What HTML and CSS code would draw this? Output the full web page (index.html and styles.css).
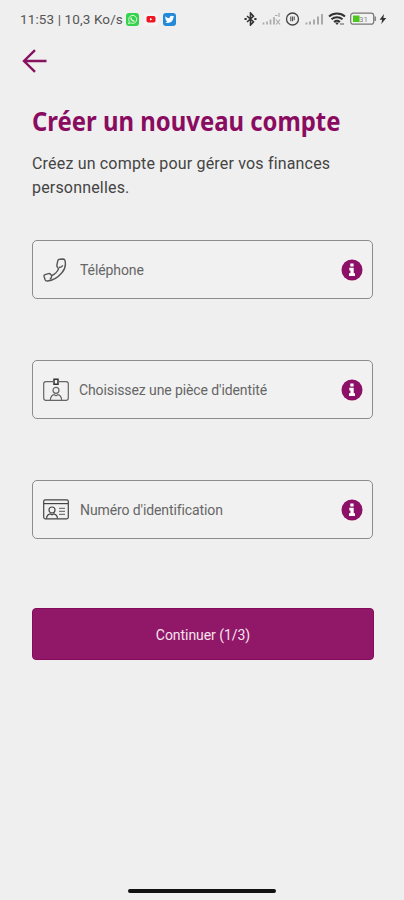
FILE: index.html
```
<!DOCTYPE html>
<html lang="fr">
<head>
  <meta charset="UTF-8">
  <meta name="viewport" content="width=device-width, initial-scale=1.0">
  <title>Créer un nouveau compte</title>
  <link rel="stylesheet" href="styles.css">
</head>

<body>
  <div class="statusbar">
    <span class="time">11:53 | 10,3 Ko/s</span>
    <div class="apps">
      <svg width="13" height="13" viewBox="0 0 13 13">
        <rect width="13" height="13" rx="3" fill="#35d24b"/>
        <path d="M2.5 10.6l.7-2.3A4 4 0 1 1 4.800 9.900z" fill="none" stroke="#d9f8dc" stroke-width="1"/>
        <path d="M5 4.400c0 2 1.400 3.500 3.500 3.800" fill="none" stroke="#d9f8dc" stroke-width="1.500"/>
      </svg>
      <svg width="14" height="13" viewBox="0 0 14 13">
        <rect width="14" height="13" rx="3" fill="#f5f4f4"/>
        <rect x="2.500" y="3" width="9" height="6.500" rx="1.800" fill="#f01520"/>
        <path d="M6 4.900v2.700l2.500-1.350z" fill="#fff"/>
      </svg>
      <svg width="13" height="13" viewBox="0 0 13 13">
        <rect width="13" height="13" rx="3" fill="#2389d9"/>
        <path d="M2.300 3.300c1.200 1.300 2.500 2 4.200 2 -.2-2.600 2.500-3.200 3.500-2l1.200-.4-.8 1.400c0 4.600-4.500 7-8.200 5l2.200-.8c-1.500-.5-2.200-2.500-2.100-5.200z" fill="#fff"/>
      </svg>
    </div>
    <div class="system">
      <svg width="13" height="14" viewBox="0 0 13 14">
        <path d="M3 4l6.500 5.700L6.500 13V1l3 3.300L3 10" fill="none" stroke="#333" stroke-width="1.600"/>
        <path d="M.5 7h2.200M10.300 7h2.200" stroke="#333" stroke-width="2"/>
      </svg>
      <svg class="signal" width="19" height="14" viewBox="0 0 19 14">
        <path d="M1.500 10.500v2M5 9.500v3M8.500 7.500v5M12 5v7.500" stroke="#aaa" stroke-width="1.700"/>
        <path d="M13 3.500h2.500M17 1v4M14 7.500l4 5M18 7.500l-4 5" stroke="#aaa" stroke-width="1.200"/>
      </svg>
      <svg width="15" height="14" viewBox="0 0 15 14">
        <circle cx="7.500" cy="7" r="6" fill="none" stroke="#444" stroke-width="1.300"/>
        <path d="M5.800 4.500v4.700M7.500 4.500v4.700M9.200 4.500v3.700" stroke="#555" stroke-width="1.100"/>
      </svg>
      <svg class="signal" width="19" height="14" viewBox="0 0 19 14">
        <path d="M1.500 10.500v2M5 9.500v3M9 7.500v5M13 4.500v8M17 2v10.500" stroke="#aaa" stroke-width="2"/>
      </svg>
      <svg class="wifi" width="18" height="14" viewBox="0 0 18 14">
        <path d="M1 4.500c4.500-4 11.500-4 16 0M3.500 7.300c3.200-2.800 7.800-2.800 11 0M6 10c2-1.600 4-1.600 6 0" fill="none" stroke="#333" stroke-width="1.900"/>
        <path d="M7 10.500h4L9 13z" fill="#333"/>
        <path d="M12 12h4" stroke="#888" stroke-width="1.500"/>
      </svg>
      <svg class="battery" width="27" height="14" viewBox="0 0 27 14">
        <rect x=".7" y="1.200" width="23" height="11" rx="2.500" fill="#f2f2f2" stroke="#777" stroke-width="1.200"/>
        <path d="M25.200 4.500v4.500" stroke="#888" stroke-width="1.700"/>
        <rect x="3" y="3.500" width="6.500" height="6.500" fill="#4bc91b"/>
        <text x="9" y="9.800" class="level">31</text>
      </svg>
      <svg width="8" height="14" viewBox="0 0 8 14">
        <path d="M5 2L.6 7.700h2.600L2.300 12l5-6H4.400z" fill="#333"/>
      </svg>
    </div>
  </div>

  <a class="back" href="#">
    <svg width="26" height="26" viewBox="0 0 26 26">
      <path d="M13 2.200L2 13l11 10.800M2 13h22.500" fill="none" stroke="#87125f" stroke-width="2.400"/>
    </svg>
  </a>

  <div class="content">
    <h1><span>Créer un nouveau compte</span></h1>
    <p class="intro">Créez un compte pour gérer vos finances personnelles.</p>

    <div class="field phone">
      <svg class="icon" width="26" height="26" viewBox="0 0 26 26">
        <g fill="none" stroke="#555" stroke-width="1.400" stroke-linejoin="round">
          <path d="M16.800 2.300l3.400-.3q1.300 0 1.700 1.200c1.200 4.500.1 9-3 12.600-3.800 4.500-9 7.800-14.500 8.200q-1.800.1-2.300-1.300l-1-3.200q-.4-1.400.9-1.800l3.600-1.100q1.200-.3 1.900.6l1.200 1.400c3-1.200 5.600-3.700 6.900-6.800l-1.200-1.600q-.7-.9-.5-2l.9-4.600q.3-1.200 2-1.300z"/>
          <path d="M16 10.500l2.300-.7q1.200-.4 1.300-1.500M8.700 18.600l-.4 2.200q-.3 1.100-1.500 1.400"/>
        </g>
      </svg>
      <span class="label">Téléphone</span>
      <svg class="info" width="22" height="22" viewBox="0 0 22 22">
        <circle cx="11" cy="11" r="10.500"/>
        <path d="M9.300 4.500h3.300v3H9.300zM8.300 8.800h4.400v5.400H14V17H8v-2.800h1.400v-2.700H8.300z"/>
      </svg>
    </div>

    <div class="field piece">
      <svg class="icon" width="26" height="26" viewBox="0 0 26 26">
        <g fill="none" stroke="#666" stroke-width="1.200">
          <path d="M10 4.700H2.800Q.7 4.700.7 6.800v14.300q0 2.200 2.100 2.200h20.400q2.100 0 2.100-2.200V6.800q0-2.100-2.100-2.100H16"/>
          <circle cx="13" cy="13.300" r="3"/>
          <path d="M7.300 23.300c.2-3.700 1.800-5.200 3.700-5.700l2 1.200 2-1.200c1.900.5 3.500 2 3.700 5.700"/>
        </g>
        <path d="M11 2.200h4v5h-4z" fill="none" stroke="#333" stroke-width="1.500"/>
      </svg>
      <span class="label">Choisissez une pièce d'identité</span>
      <svg class="info" width="22" height="22" viewBox="0 0 22 22">
        <circle cx="11" cy="11" r="10.500"/>
        <path d="M9.300 4.500h3.300v3H9.300zM8.300 8.800h4.400v5.400H14V17H8v-2.800h1.400v-2.700H8.300z"/>
      </svg>
    </div>

    <div class="field numero">
      <svg class="icon" width="26" height="26" viewBox="0 0 26 26">
        <g fill="none" stroke="#444" stroke-width="1.200">
          <rect x=".7" y="2.800" width="24.600" height="19" rx="1.500"/>
          <path d="M1 6.600h24"/>
          <circle cx="9" cy="13" r="3"/>
          <path d="M3.500 21.600c.1-3.200 1.700-4.300 3.700-4.800l1.800 1 1.800-1c2 .5 3.600 1.600 3.700 4.800"/>
          <path d="M16 11.300h6M16 14.300h6M16 17.300h6" stroke="#777"/>
        </g>
      </svg>
      <span class="label">Numéro d'identification</span>
      <svg class="info" width="22" height="22" viewBox="0 0 22 22">
        <circle cx="11" cy="11" r="10.500"/>
        <path d="M9.300 4.500h3.300v3H9.300zM8.300 8.800h4.400v5.400H14V17H8v-2.800h1.400v-2.700H8.300z"/>
      </svg>
    </div>

    <button class="next" type="button">Continuer (1/3)</button>
  </div>

  <div class="homebar"></div>
</body>

</html>
```

FILE: styles.css
```
* {
  box-sizing: border-box;
}

body {
  margin: 0;
  height: 900px;
  display: flex;
  flex-direction: column;
  background-color: #efefef;
  font-family: Roboto, "Liberation Sans", sans-serif;
  color: #444;
}

svg {
  display: block;
  flex: none;
}

.statusbar {
  display: flex;
  align-items: center;
  height: 38px;
  padding: 0 17px 0 20px;
}

.time {
  width: 106px;
  font-size: 13.5px;
  letter-spacing: 0.12px;
  white-space: nowrap;
  color: #555;
}

.apps {
  display: flex;
  gap: 5px;
}

.system {
  display: flex;
  margin-left: auto;
}

.signal {
  margin: 0 4px 0 5px;
}

.wifi {
  margin-right: 4px;
}

.battery {
  margin-right: 2px;
}

.level {
  font-size: 8px;
  fill: #888;
}

.back {
  width: 26px;
  margin: 10px 0 0 22px;
}

.content {
  padding: 30px 30px 0 32px;
}

h1 {
  margin: 0;
  font-family: "Noto Sans", sans-serif;
  font-size: 26px;
  font-weight: 700;
  line-height: 34px;
  white-space: nowrap;
  color: #8a0c60;
}

h1 span {
  display: inline-block;
  transform: scaleX(0.919);
  transform-origin: left;
}

.intro {
  width: 310px;
  margin: 14px 0 40px;
  font-size: 16px;
  line-height: 24px;
  letter-spacing: 0.18px;
}

.field {
  display: flex;
  align-items: center;
  width: 341px;
  height: 59px;
  margin-bottom: 61px;
  padding: 0 9px 0 10px;
  border: 1px solid #8c8c8c;
  border-radius: 5px;
  background-color: #f1f1f1;
}

.label {
  flex: 1;
  margin-left: 11px;
  padding-top: 1px;
  font-size: 14px;
  letter-spacing: -0.1px;
  color: #666;
}

.piece .label {
  margin-left: 10px;
}

.info circle {
  fill: #8c1065;
}

.info path {
  fill: #fff;
}

.next {
  display: block;
  width: 342px;
  height: 52px;
  margin-top: 69px;
  padding-top: 3px;
  border: 1px solid #850c5c;
  border-radius: 4px;
  background-color: #911768;
  font-family: inherit;
  font-size: 14px;
  letter-spacing: -0.05px;
  color: #f5e4ef;
}

.homebar {
  width: 148px;
  height: 4px;
  margin: auto auto 7px 128px;
  border-radius: 2px;
  background-color: #111;
}
```
